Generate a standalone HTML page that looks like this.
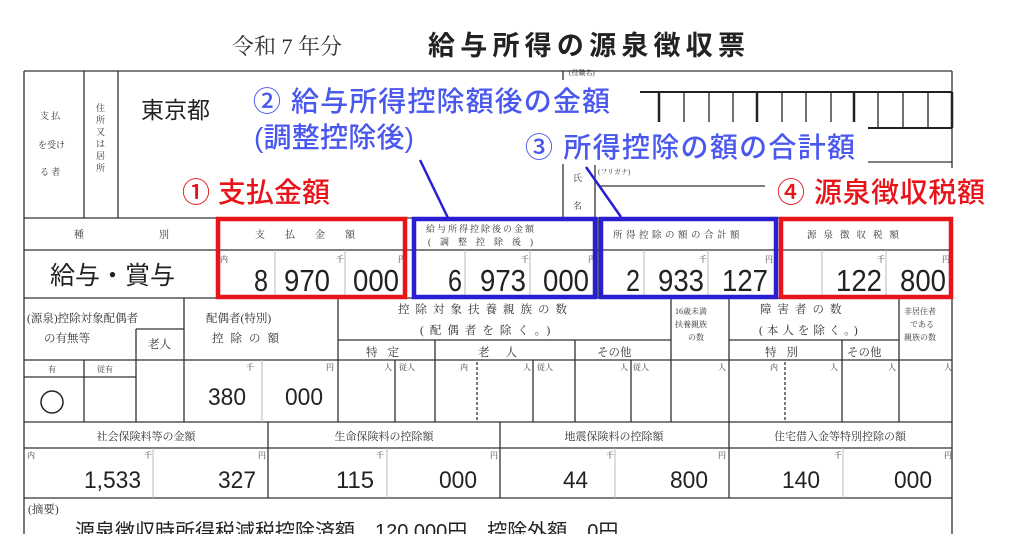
<!DOCTYPE html>
<html><head><meta charset="utf-8"><style>
html,body{margin:0;padding:0;background:#fff;width:1024px;height:534px;overflow:hidden}
svg{display:block}
.m{font-family:"Liberation Serif","Noto Serif CJK SC",serif;fill:#333}
.s{font-family:"Liberation Sans","Noto Sans CJK JP",sans-serif}
.n{font-family:"Liberation Sans",sans-serif;fill:#222}
.b{font-family:"Liberation Sans","Noto Sans CJK JP",sans-serif;fill:#4a58ee;font-weight:500}
.r{font-family:"Liberation Sans","Noto Sans CJK JP",sans-serif;fill:#e8141a;font-weight:500}
</style></head><body>
<svg width="1024" height="534" viewBox="0 0 1024 534" xmlns="http://www.w3.org/2000/svg">
<g stroke="#333" stroke-width="1.3" fill="none">
<line x1="24" y1="71" x2="952" y2="71"/>
<line x1="24" y1="71" x2="24" y2="534"/>
<line x1="952" y1="71" x2="952" y2="168"/>
<line x1="952" y1="218" x2="952" y2="534"/>
<line x1="84" y1="71" x2="84" y2="218"/>
<line x1="118" y1="71" x2="118" y2="218"/>
<line x1="563" y1="71" x2="563" y2="218"/>
<line x1="595" y1="165" x2="595" y2="218"/>
<line x1="600" y1="186" x2="765" y2="186"/>
<line x1="24" y1="218" x2="952" y2="218"/>
<line x1="24" y1="250" x2="952" y2="250"/>
<line x1="24" y1="298" x2="952" y2="298"/>
<line x1="24" y1="360" x2="952" y2="360"/>
<line x1="24" y1="422" x2="952" y2="422"/>
<line x1="24" y1="448" x2="952" y2="448"/>
<line x1="24" y1="498" x2="952" y2="498"/>
<line x1="640" y1="92" x2="952" y2="92" stroke-width="2" stroke="#222"/>
<line x1="868" y1="128" x2="952" y2="128" stroke-width="2" stroke="#222"/>
<line x1="868" y1="162" x2="952" y2="162"/>
</g>
<g stroke="#222" stroke-width="1.3">
<line x1="659" y1="92" x2="659" y2="122" stroke-width="2.5"/>
<line x1="684" y1="92" x2="684" y2="122"/>
<line x1="709" y1="92" x2="709" y2="122"/>
<line x1="733" y1="92" x2="733" y2="122"/>
<line x1="757" y1="92" x2="757" y2="122" stroke-width="2.5"/>
<line x1="782" y1="92" x2="782" y2="122"/>
<line x1="806" y1="92" x2="806" y2="122"/>
<line x1="831" y1="92" x2="831" y2="122"/>
<line x1="854" y1="92" x2="854" y2="122" stroke-width="2.5"/>
<line x1="878" y1="92" x2="878" y2="128"/>
<line x1="903" y1="92" x2="903" y2="128"/>
<line x1="928" y1="92" x2="928" y2="128"/>
<line x1="952" y1="92" x2="952" y2="128" stroke-width="2.5"/>
</g>
<g stroke="#bbb" stroke-width="1">
<line x1="275" y1="250" x2="275" y2="298"/><line x1="345" y1="250" x2="345" y2="298"/>
<line x1="465" y1="250" x2="465" y2="298"/><line x1="530" y1="250" x2="530" y2="298"/>
<line x1="644" y1="250" x2="644" y2="298"/><line x1="708" y1="250" x2="708" y2="298"/>
<line x1="822" y1="250" x2="822" y2="298"/><line x1="886" y1="250" x2="886" y2="298"/>
<line x1="262" y1="360" x2="262" y2="422"/>
<line x1="153" y1="448" x2="153" y2="498"/><line x1="387" y1="448" x2="387" y2="498"/>
<line x1="615" y1="448" x2="615" y2="498"/><line x1="843" y1="448" x2="843" y2="498"/>
</g>
<g stroke="#333" stroke-width="1.3">
<line x1="598" y1="218" x2="598" y2="298"/>
<line x1="136" y1="329" x2="136" y2="422"/>
<line x1="136" y1="329" x2="184" y2="329"/>
<line x1="184" y1="298" x2="184" y2="422"/>
<line x1="338" y1="298" x2="338" y2="422"/>
<line x1="671" y1="298" x2="671" y2="422"/>
<line x1="729" y1="298" x2="729" y2="422"/>
<line x1="899" y1="298" x2="899" y2="422"/>
<line x1="338" y1="340" x2="671" y2="340"/>
<line x1="729" y1="340" x2="899" y2="340"/>
<line x1="435" y1="340" x2="435" y2="422"/>
<line x1="575" y1="340" x2="575" y2="422"/>
<line x1="842" y1="340" x2="842" y2="422"/>
<line x1="395" y1="360" x2="395" y2="422"/>
<line x1="533" y1="360" x2="533" y2="422"/>
<line x1="631" y1="360" x2="631" y2="422"/>
<line x1="84" y1="360" x2="84" y2="422"/>
<line x1="24" y1="377" x2="136" y2="377"/>
<line x1="268" y1="422" x2="268" y2="498"/>
<line x1="500" y1="422" x2="500" y2="498"/>
<line x1="729" y1="422" x2="729" y2="498"/>
<line x1="477" y1="362" x2="477" y2="422" stroke-dasharray="3,2"/>
<line x1="785" y1="362" x2="785" y2="422" stroke-dasharray="3,2"/>
</g>
<text x="232" y="54" class="m" font-size="22" fill="#222">令和 7 年分</text>
<text x="428" y="55" class="s" font-size="27" font-weight="bold" fill="#222" textLength="317">給与所得の源泉徴収票</text>
<text class="m" font-size="9"><tspan x="40" y="119">支 払</tspan><tspan x="38" y="148">を受け</tspan><tspan x="40" y="175">る 者</tspan></text>
<text class="m" font-size="9"><tspan x="96" y="111">住</tspan><tspan x="96" y="123">所</tspan><tspan x="96" y="135">又</tspan><tspan x="96" y="147">は</tspan><tspan x="96" y="159">居</tspan><tspan x="96" y="171">所</tspan></text>
<text x="141" y="118" class="s" font-size="23" fill="#222">東京都</text>
<text x="573" y="181" class="m" font-size="9">氏</text>
<text x="573" y="209" class="m" font-size="9">名</text>
<text x="598" y="174" class="m" font-size="7" fill="#888">(フリガナ)</text>
<text x="569" y="75" class="m" font-size="7" fill="#aaa">(役職名)</text>
<text x="74" y="238" class="m" font-size="10">種</text>
<text x="159" y="238" class="m" font-size="10">別</text>
<text x="255" y="238" class="m" font-size="10" letter-spacing="20">支払金額</text>
<text x="426" y="232" class="m" font-size="9" letter-spacing="2">給与所得控除後の金額</text>
<text x="428" y="245" class="m" font-size="9" letter-spacing="9">(調整控除後)</text>
<text x="613" y="238" class="m" font-size="9.5" letter-spacing="3.5">所得控除の額の合計額</text>
<text x="807" y="238" class="m" font-size="9.5" letter-spacing="7">源泉徴収税額</text>
<text x="50" y="284" class="s" font-size="25" fill="#222">給与・賞与</text>
<g class="m" font-size="8">
<text x="220" y="262">内</text><text x="336" y="262">千</text><text x="398" y="262">円</text>
<text x="521" y="262">千</text><text x="588" y="262">円</text>
<text x="699" y="262">千</text><text x="765" y="262">円</text>
<text x="877" y="262">千</text><text x="942" y="262">円</text>
</g>
<g class="n" font-size="31" lengthAdjust="spacingAndGlyphs">
<text x="254" y="291" textLength="14" lengthAdjust="spacingAndGlyphs">8</text><text x="284" y="291" textLength="46" lengthAdjust="spacingAndGlyphs">970</text><text x="353" y="291" textLength="46" lengthAdjust="spacingAndGlyphs">000</text>
<text x="448" y="291" textLength="14" lengthAdjust="spacingAndGlyphs">6</text><text x="480" y="291" textLength="46" lengthAdjust="spacingAndGlyphs">973</text><text x="543" y="291" textLength="46" lengthAdjust="spacingAndGlyphs">000</text>
<text x="626" y="291" textLength="14" lengthAdjust="spacingAndGlyphs">2</text><text x="658" y="291" textLength="46" lengthAdjust="spacingAndGlyphs">933</text><text x="722" y="291" textLength="46" lengthAdjust="spacingAndGlyphs">127</text>
<text x="836" y="291" textLength="46" lengthAdjust="spacingAndGlyphs">122</text><text x="900" y="291" textLength="46" lengthAdjust="spacingAndGlyphs">800</text>
</g>
<g class="m" font-size="11.5">
<text x="27" y="322">(源泉)控除対象配偶者</text>
<text x="44" y="342">の有無等</text>
<text x="148" y="348">老人</text>
<text x="206" y="322">配偶者(特別)</text>
<text x="212" y="342" letter-spacing="7">控除の額</text>
<text x="398" y="313" letter-spacing="6">控除対象扶養親族の数</text>
<text x="420" y="334" letter-spacing="6">(配偶者を除く。)</text>
<text x="366" y="356" letter-spacing="10">特定</text>
<text x="478" y="356" letter-spacing="16">老人</text>
<text x="597" y="356">その他</text>
<text x="760" y="313" letter-spacing="6">障害者の数</text>
<text x="759" y="334" letter-spacing="4">(本人を除く。)</text>
<text x="765" y="356" letter-spacing="10">特別</text>
<text x="847" y="356">その他</text>
<text x="28" y="513">(摘要)</text>
</g>
<g class="m" font-size="8">
<text x="675" y="314">16歳未満</text><text x="675" y="327">扶養親族</text><text x="688" y="340">の数</text>
<text x="904" y="314">非居住者</text><text x="910" y="327">である</text><text x="904" y="340">親族の数</text>
<text x="48" y="372">有</text><text x="97" y="372">従有</text>
<text x="246" y="370">千</text><text x="326" y="370">円</text>
<text x="384" y="370">人</text><text x="399" y="370">従人</text><text x="460" y="370">内</text><text x="523" y="370">人</text><text x="537" y="370">従人</text>
<text x="620" y="370">人</text><text x="633" y="370">従人</text><text x="718" y="370">人</text>
<text x="770" y="370">内</text><text x="830" y="370">人</text><text x="888" y="370">人</text><text x="944" y="370">人</text>
<text x="27" y="458">内</text><text x="144" y="458">千</text><text x="258" y="458">円</text>
<text x="376" y="458">千</text><text x="490" y="458">円</text>
<text x="606" y="458">千</text><text x="718" y="458">円</text>
<text x="834" y="458">千</text><text x="944" y="458">円</text>
</g>
<g class="m" font-size="11">
<text x="146" y="440" text-anchor="middle">社会保険料等の金額</text>
<text x="384" y="440" text-anchor="middle">生命保険料の控除額</text>
<text x="614" y="440" text-anchor="middle">地震保険料の控除額</text>
<text x="840" y="440" text-anchor="middle">住宅借入金等特別控除の額</text>
</g>
<circle cx="52" cy="402" r="11" fill="none" stroke="#222" stroke-width="1.5"/>
<g class="n" font-size="24">
<text x="208" y="405" textLength="38" lengthAdjust="spacingAndGlyphs">380</text><text x="285" y="405" textLength="38" lengthAdjust="spacingAndGlyphs">000</text>
<text x="84" y="488" textLength="57" lengthAdjust="spacingAndGlyphs">1,533</text><text x="218" y="488" textLength="38" lengthAdjust="spacingAndGlyphs">327</text>
<text x="336" y="488" textLength="38" lengthAdjust="spacingAndGlyphs">115</text><text x="439" y="488" textLength="38" lengthAdjust="spacingAndGlyphs">000</text>
<text x="563" y="488" textLength="25" lengthAdjust="spacingAndGlyphs">44</text><text x="670" y="488" textLength="38" lengthAdjust="spacingAndGlyphs">800</text>
<text x="782" y="488" textLength="38" lengthAdjust="spacingAndGlyphs">140</text><text x="894" y="488" textLength="38" lengthAdjust="spacingAndGlyphs">000</text>
</g>
<text x="75" y="538" class="s" font-size="20" fill="#222">源泉徴収時所得税減税控除済額　120,000円、控除外額　0円</text>
<g fill="none" stroke-width="4.5">
<rect x="218" y="219" width="187" height="78" stroke="#e8141a"/>
<rect x="414" y="219" width="181" height="78" stroke="#2a1fd0"/>
<rect x="601" y="219" width="175" height="78" stroke="#2a1fd0"/>
<rect x="781" y="219" width="170" height="78" stroke="#e8141a"/>
</g>
<g stroke="#2a1fd0" stroke-width="2.5">
<line x1="420" y1="160" x2="448" y2="218"/>
<line x1="586" y1="167" x2="621" y2="217"/>
</g>
<rect x="250" y="80" width="368" height="72" fill="#fff"/>
<rect x="523" y="128" width="340" height="36" fill="#fff"/>
<text x="253" y="111" class="b" font-size="28" textLength="357">② 給与所得控除額後の金額</text>
<text x="254" y="147" class="b" font-size="28" textLength="160">(調整控除後)</text>
<text x="525" y="157" class="b" font-size="28" textLength="330">③ 所得控除の額の合計額</text>
<text x="182" y="202" class="r" font-size="28" textLength="148">① 支払金額</text>
<text x="777" y="202" class="r" font-size="28" textLength="208">④ 源泉徴収税額</text>
</svg>
</body></html>
